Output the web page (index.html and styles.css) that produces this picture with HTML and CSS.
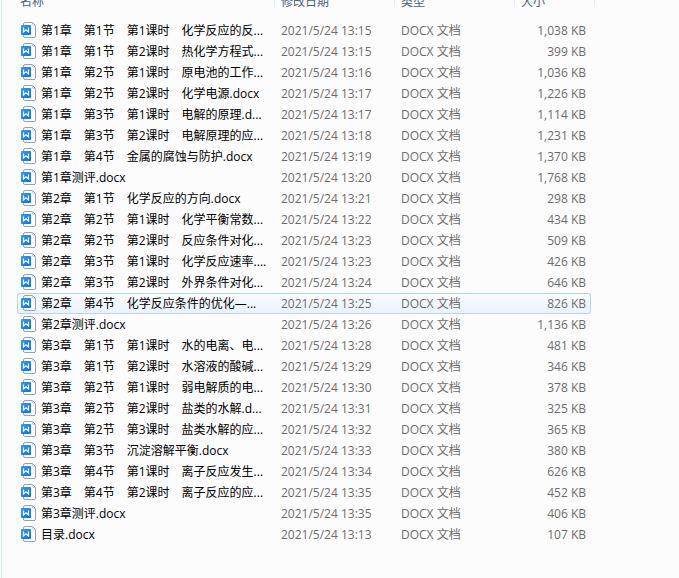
FILE: index.html
```html
<!DOCTYPE html>
<html lang="zh-CN">
<head>
  <meta charset="UTF-8" />
  <title>文件列表</title>
  <link rel="stylesheet" href="styles.css">
</head>
<body>
  <svg class="sprite" aria-hidden="true">
    <defs>
      <linearGradient id="azul" x1="0" y1="0" x2="1" y2="1">
        <stop offset="0" stop-color="#2aa0ff" />
        <stop offset="1" stop-color="#0a6cf5" />
      </linearGradient>
    </defs>
    <symbol id="docx" viewBox="0 0 16 17">
      <path d="M2.5 3V2Q2.5 .5 4 .5H11.5L14.5 3.5V14Q14.5 15.5 13 15.5H4Q2.5 15.5 2.5 14V3Z" fill="#fff" stroke="#98a1b2" />
      <path d="M11.5 .5V2.5Q11.5 3.5 12.5 3.5H14.5" fill="none" stroke="#c3cad5" />
      <rect x="0" y="3" width="10" height="10" rx="1" fill="url(#azul)" />
      <path d="M2.5 5.5V10L5 7.8L7.5 10V5.5" fill="none" stroke="#fff" stroke-width="1.2" />
    </symbol>
  </svg>

  <main class="file-view">
    <table class="file-list">
      <colgroup>
        <col class="col-name">
        <col class="col-date">
        <col class="col-type">
        <col class="col-size">
        <col class="col-end">
      </colgroup>
      <thead>
        <tr>
          <th scope="col">名称</th>
          <th scope="col">修改日期</th>
          <th scope="col">类型</th>
          <th scope="col" colspan="2">大小</th>
        </tr>
      </thead>
      <tbody id="files"></tbody>
    </table>
  </main>

  <script>
    const selected = 13;

    const files = [
      ["第1章　第1节　第1课时　化学反应的反...", "13:15", "1,038"],
      ["第1章　第1节　第2课时　热化学方程式...", "13:15", "399"],
      ["第1章　第2节　第1课时　原电池的工作...", "13:16", "1,036"],
      ["第1章　第2节　第2课时　化学电源.docx", "13:17", "1,226"],
      ["第1章　第3节　第1课时　电解的原理.d...", "13:17", "1,114"],
      ["第1章　第3节　第2课时　电解原理的应...", "13:18", "1,231"],
      ["第1章　第4节　金属的腐蚀与防护.docx", "13:19", "1,370"],
      ["第1章测评.docx", "13:20", "1,768"],
      ["第2章　第1节　化学反应的方向.docx", "13:21", "298"],
      ["第2章　第2节　第1课时　化学平衡常数...", "13:22", "434"],
      ["第2章　第2节　第2课时　反应条件对化...", "13:23", "509"],
      ["第2章　第3节　第1课时　化学反应速率....", "13:23", "426"],
      ["第2章　第3节　第2课时　外界条件对化...", "13:24", "646"],
      ["第2章　第4节　化学反应条件的优化—...", "13:25", "826"],
      ["第2章测评.docx", "13:26", "1,136"],
      ["第3章　第1节　第1课时　水的电离、电...", "13:28", "481"],
      ["第3章　第1节　第2课时　水溶液的酸碱...", "13:29", "346"],
      ["第3章　第2节　第1课时　弱电解质的电...", "13:30", "378"],
      ["第3章　第2节　第2课时　盐类的水解.d...", "13:31", "325"],
      ["第3章　第2节　第3课时　盐类水解的应...", "13:32", "365"],
      ["第3章　第3节　沉淀溶解平衡.docx", "13:33", "380"],
      ["第3章　第4节　第1课时　离子反应发生...", "13:34", "626"],
      ["第3章　第4节　第2课时　离子反应的应...", "13:35", "452"],
      ["第3章测评.docx", "13:35", "406"],
      ["目录.docx", "13:13", "107"]
    ];

    document.getElementById("files").innerHTML = files
      .map(([name, time, size], i) => `
        <tr${i === selected ? ' class="selected" aria-selected="true"' : ""}>
          <td><div class="name"><svg class="icon" aria-hidden="true"><use href="#docx" /></svg><span>${name}</span></div></td>
          <td>2021/5/24 ${time}</td>
          <td>DOCX 文档</td>
          <td class="size">${size} KB</td>
        </tr>`)
      .join("");
  </script>
</body>
</html>
```
FILE: styles.css
```css
body {
  margin: 0;
  background-color: #fcfcfc;
  color: #6d6d6d;
  font-family: "Open Sans", "Noto Sans CJK SC", sans-serif;
  font-size: 12px;
}

.sprite {
  display: block;
  width: 0;
  height: 0;
}

.file-view {
  box-sizing: border-box;
  height: 100vh;
  margin-left: 1px;
  padding-left: 15px;
  border-left: 1px solid #d6e5f5;
  overflow: hidden;
}

/* the list is scrolled a little, so the header is cut off at the top */
.file-list {
  margin-top: -14px;
  table-layout: fixed;
  width: 578px;
  border-collapse: separate;
  border-spacing: 0;
}

.col-name {
  width: 258px;
}

.col-date,
.col-type {
  width: 120px;
}

.col-size {
  width: 76px;
}

.col-end {
  width: 4px;
}

th {
  height: 34px;
  padding: 6px 0 0 6px;
  box-sizing: border-box;
  color: #4c607a;
  font-weight: normal;
  line-height: 20px;
  text-align: left;
  vertical-align: top;
  background: linear-gradient(#dfe9f7 60%, #fcfcfc) right top / 1px 25px no-repeat;
}

th:first-child {
  padding-left: 3px;
}

td {
  box-sizing: border-box;
  height: 21px;
  padding: 0 0 0 6px;
  border: 0 solid transparent;
  border-width: 1px 0;
  line-height: 19px;
  white-space: nowrap;
}

td:first-child {
  padding-left: 3px;
  border-left-width: 1px;
}

td.size {
  padding: 0 4px 0 0;
  border-right-width: 1px;
  text-align: right;
}

.name {
  display: flex;
  align-items: center;
  gap: 4px;
  height: 19px;
  color: #000;
}

.icon {
  flex: none;
  width: 16px;
  height: 17px;
}

.selected td {
  border-color: #b5d3fb;
  background: linear-gradient(#fafcfe, #e9f2fd) padding-box;
}

.selected td:first-child {
  border-radius: 3px 0 0 3px;
}

.selected td.size {
  border-radius: 0 3px 3px 0;
}
```
